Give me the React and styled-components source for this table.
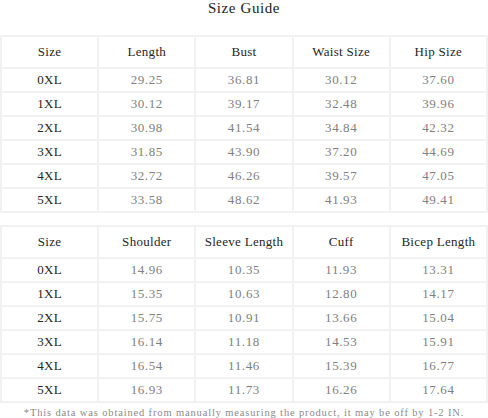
import React from "react";
import styled, { createGlobalStyle } from "styled-components";

const GlobalStyle = createGlobalStyle`
  html, body {
    margin: 0;
    padding: 0;
    background: #fff;
  }
  body {
    font-family: "Liberation Serif", "Times New Roman", serif;
  }
`;

const Page = styled.div`
  width: 488px;
  height: 418px;
  display: flex;
  flex-direction: column;
  overflow: hidden;
`;

const Title = styled.h1`
  margin: 0;
  height: 36px;
  font-size: 15px;
  font-weight: normal;
  letter-spacing: 0.6px;
  line-height: 16px;
  text-align: center;
  color: #222;
`;

const Table = styled.table`
  width: 488px;
  border-collapse: collapse;
  table-layout: fixed;
  margin-bottom: ${(p) => p.$gap || 0}px;
`;

const Cell = styled.td`
  border: 2px solid #f1f1f1;
  height: ${(p) => (p.$head ? 30 : 22)}px;
  padding: 0;
  text-align: center;
  font-size: 13px;
  letter-spacing: ${(p) => (p.$head || p.$size ? 0.3 : 0.6)}px;
  color: ${(p) => (p.$head || p.$size ? "#262626" : "#808080")};
  white-space: nowrap;
`;

const Note = styled.p`
  margin: 0;
  padding-top: 4px;
  font-size: 10.5px;
  letter-spacing: 0.85px;
  text-align: center;
  color: #8a8a8a;
  white-space: nowrap;
`;

const sizes = ["0XL", "1XL", "2XL", "3XL", "4XL", "5XL"];

const bodyTable = {
  head: ["Size", "Length", "Bust", "Waist Size", "Hip Size"],
  rows: [
    ["29.25", "36.81", "30.12", "37.60"],
    ["30.12", "39.17", "32.48", "39.96"],
    ["30.98", "41.54", "34.84", "42.32"],
    ["31.85", "43.90", "37.20", "44.69"],
    ["32.72", "46.26", "39.57", "47.05"],
    ["33.58", "48.62", "41.93", "49.41"],
  ],
};

const armTable = {
  head: ["Size", "Shoulder", "Sleeve Length", "Cuff", "Bicep Length"],
  rows: [
    ["14.96", "10.35", "11.93", "13.31"],
    ["15.35", "10.63", "12.80", "14.17"],
    ["15.75", "10.91", "13.66", "15.04"],
    ["16.14", "11.18", "14.53", "15.91"],
    ["16.54", "11.46", "15.39", "16.77"],
    ["16.93", "11.73", "16.26", "17.64"],
  ],
};

const SizeTable = ({ data, gap }) => (
  <Table $gap={gap}>
    <tbody>
      <tr>
        {data.head.map((h) => (
          <Cell key={h} $head>
            {h}
          </Cell>
        ))}
      </tr>
      {data.rows.map((row, i) => (
        <tr key={sizes[i]}>
          <Cell $size>{sizes[i]}</Cell>
          {row.map((v, j) => (
            <Cell key={j}>{v}</Cell>
          ))}
        </tr>
      ))}
    </tbody>
  </Table>
);

export default function App() {
  return (
    <Page>
      <GlobalStyle />
      <Title>Size Guide</Title>
      <SizeTable data={bodyTable} gap={12} />
      <SizeTable data={armTable} />
      <Note>
        *This data was obtained from manually measuring the product, it may be
        off by 1-2 IN.
      </Note>
    </Page>
  );
}
